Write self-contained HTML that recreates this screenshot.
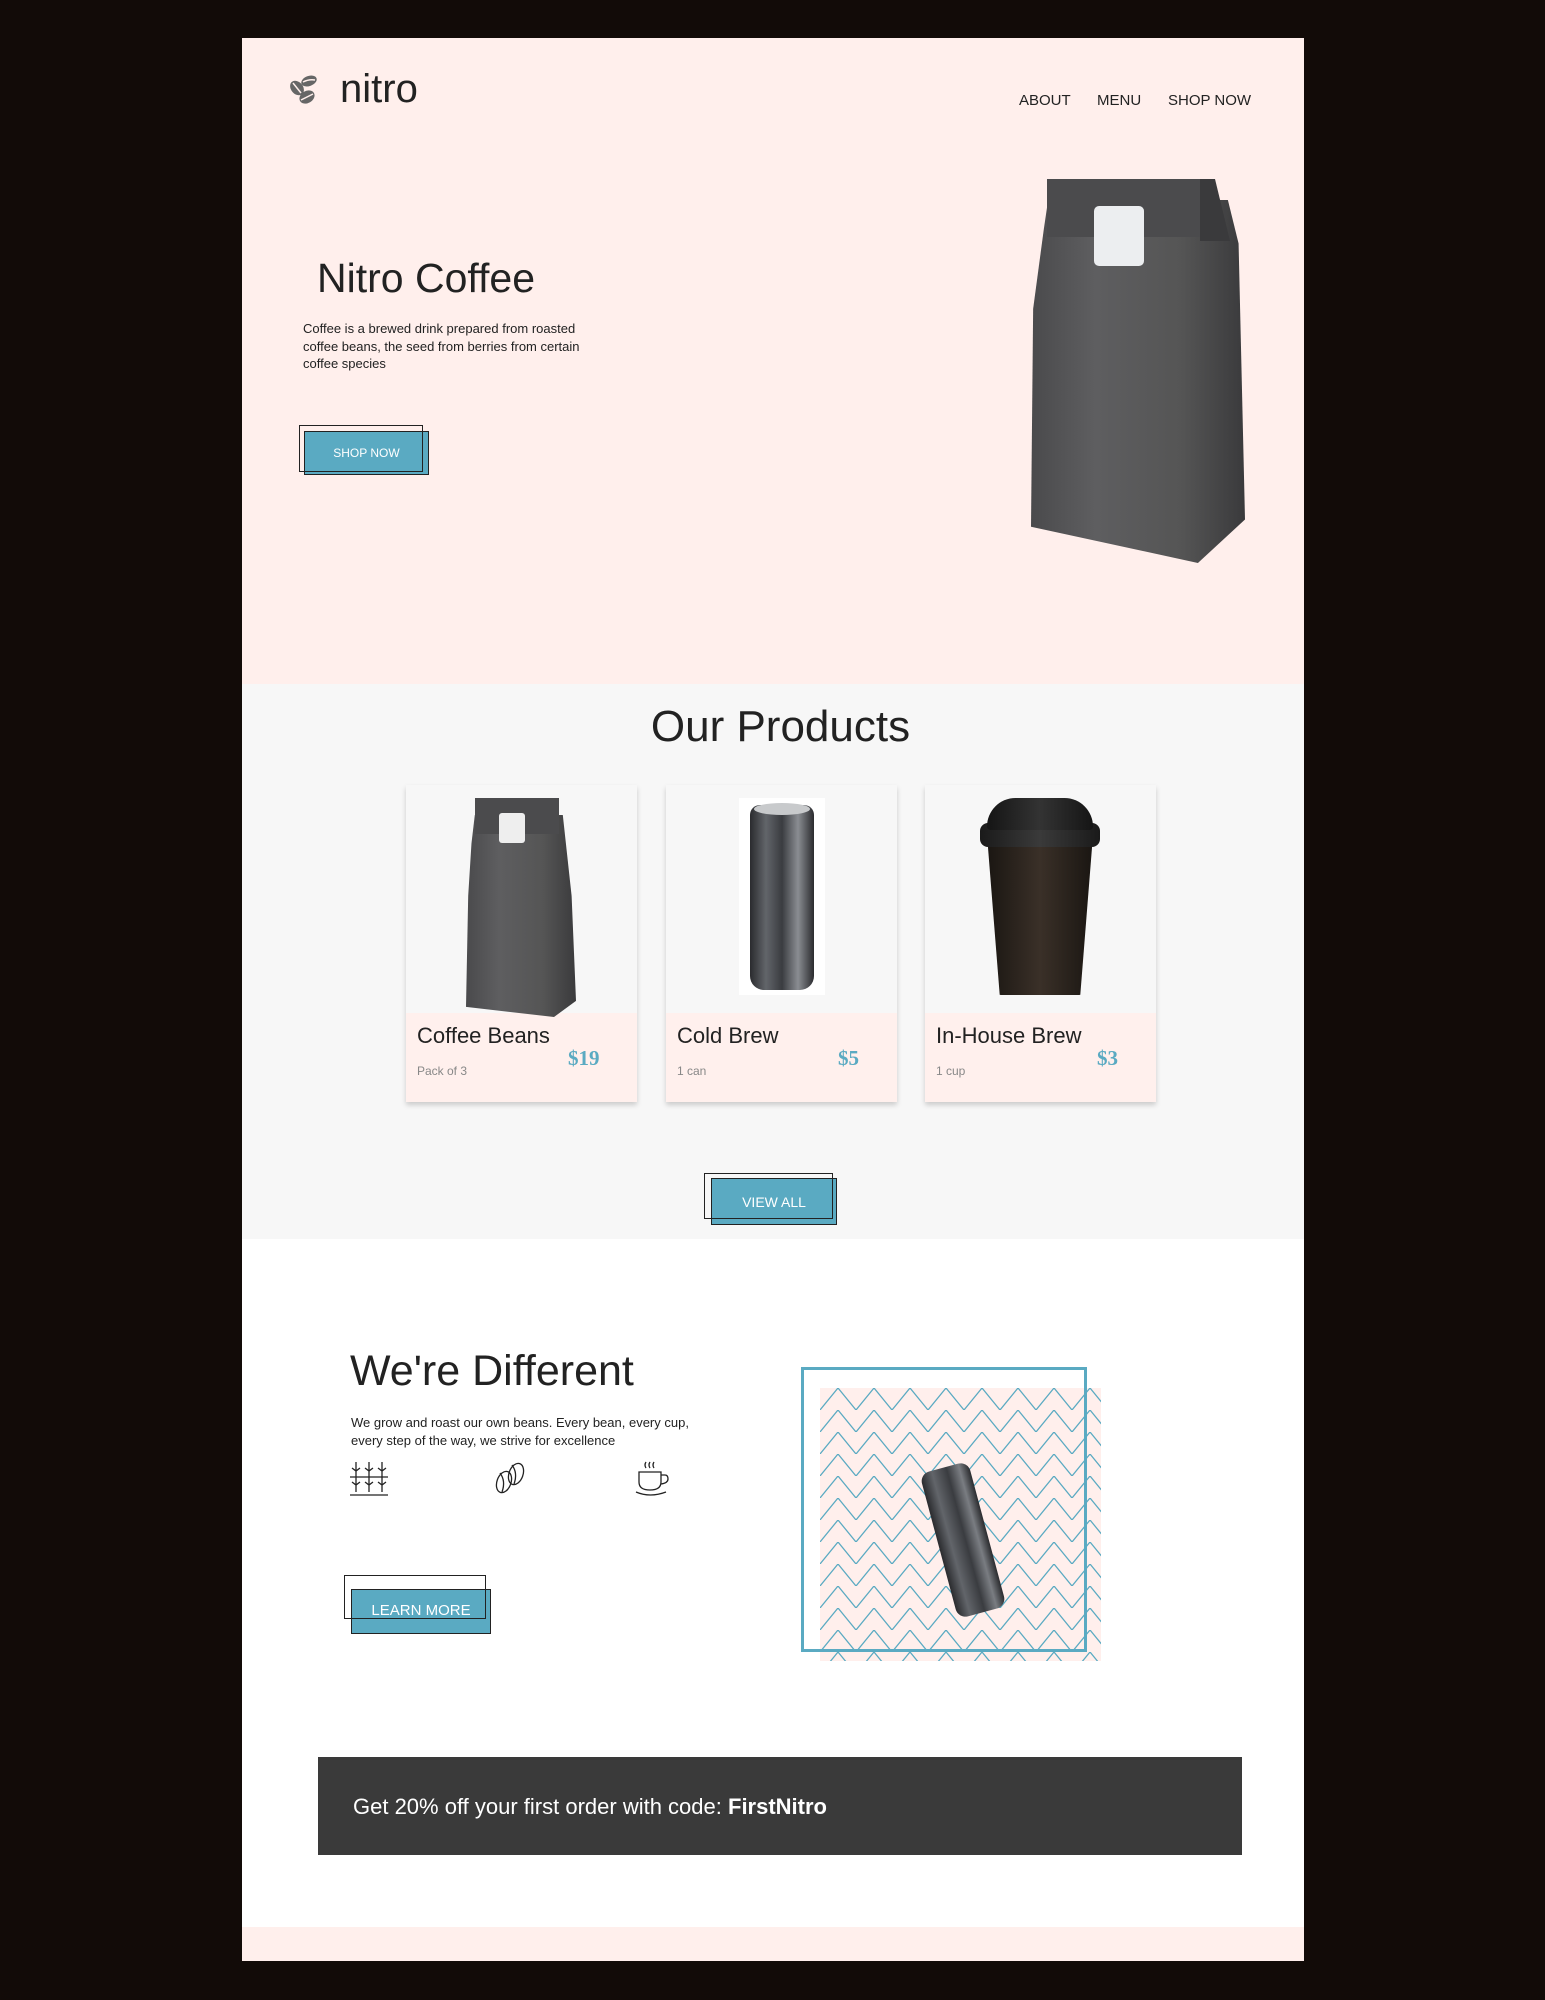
<!DOCTYPE html>
<html><head><meta charset="utf-8"><style>
*{margin:0;padding:0;box-sizing:border-box}
body{width:1545px;height:2000px;background:#120b08;position:relative;font-family:"Liberation Sans",sans-serif;overflow:hidden}
.a{position:absolute}
.page{left:242px;top:38px;width:1062px;height:1923px;background:#fff}
.btn{position:absolute;background:#5aaac2;color:#fff;font-size:12px;display:flex;align-items:center;justify-content:center;border:1.5px solid #222}
.ol{position:absolute;border:1.5px solid #222}
.bag{position:absolute;background:linear-gradient(90deg,#4a4a4c 0%,#5e5e60 30%,#555 70%,#3a3a3c 100%)}
.card{position:absolute;top:785px;width:231px;height:317px;background:#f7f7f7;box-shadow:0 3px 5px rgba(0,0,0,.18)}
.card .bot{position:absolute;left:0;right:0;bottom:0;height:89px;background:#fff0ed}
.nm{position:absolute;left:11px;top:10px;font-size:22px;color:#222;font-weight:300}
.sb{position:absolute;left:11px;top:51px;font-size:12px;color:#888}
.pr{position:absolute;top:33px;font-family:"Liberation Serif",serif;font-weight:bold;font-size:21px;color:#5aaac2}
</style></head><body>
<div class="a page"></div>
<div class="a" style="left:242px;top:38px;width:1062px;height:646px;background:#ffefec"></div>
<svg class="a" style="left:288px;top:73px" width="34" height="32" viewBox="0 0 34 32">
<ellipse cx="21" cy="8" rx="8" ry="5" fill="#666" transform="rotate(-20 21 8)"/><path d="M15 9 q6 -3 12 -2" stroke="#ffefec" stroke-width="1.5" fill="none"/>
<ellipse cx="9" cy="15" rx="6" ry="8" fill="#666" transform="rotate(-40 9 15)"/><path d="M5 10 l8 10" stroke="#ffefec" stroke-width="1.5"/>
<ellipse cx="19" cy="24" rx="8" ry="6" fill="#666" transform="rotate(-30 19 24)"/><path d="M13 27 l12 -6" stroke="#ffefec" stroke-width="1.5"/>
</svg>
<div class="a" style="left:340px;top:67px;font-size:40px;color:#222;font-weight:300">nitro</div>
<div class="a" style="left:1019px;top:92px;font-size:15px;color:#222">ABOUT</div>
<div class="a" style="left:1097px;top:92px;font-size:15px;color:#222">MENU</div>
<div class="a" style="left:1168px;top:92px;font-size:15px;color:#222">SHOP NOW</div>
<div class="a" style="left:317px;top:255px;font-size:41px;color:#222">Nitro Coffee</div>
<div class="a" style="left:303px;top:320px;font-size:13px;line-height:17.5px;color:#222;width:300px">Coffee is a brewed drink prepared from roasted coffee beans, the seed from berries from certain coffee species</div>
<div class="btn" style="left:304px;top:431px;width:125px;height:44px">SHOP NOW</div>
<div class="ol" style="left:299px;top:425px;width:124px;height:47px"></div>
<!-- hero bag -->
<div class="bag" style="left:1031px;top:200px;width:214px;height:363px;clip-path:polygon(6% 8%,8% 0,92% 0,97% 12%,100% 88%,78% 100%,0 90%,1% 30%)"></div>
<div class="a" style="left:1047px;top:179px;width:160px;height:58px;background:#4b4b4d"></div>
<div class="a" style="left:1200px;top:179px;width:30px;height:62px;background:#3a3a3c;clip-path:polygon(0 0,50% 0,100% 100%,0 100%)"></div>
<div class="a" style="left:1094px;top:206px;width:50px;height:60px;background:#eceef0;border-radius:5px"></div>
<!-- products -->
<div class="a" style="left:242px;top:684px;width:1062px;height:555px;background:#f7f7f7"></div>
<div class="a" style="left:0;width:1545px;top:702px;text-align:center;font-size:44px;color:#222;font-weight:300;padding-left:16px">Our Products</div>
<div class="card" style="left:406px"><div class="bot"><div class="nm">Coffee Beans</div><div class="sb">Pack of 3</div><div class="pr" style="left:162px">$19</div></div>
<div class="bag" style="left:60px;top:30px;width:110px;height:202px;clip-path:polygon(5% 14%,8% 0,88% 0,96% 40%,100% 92%,80% 100%,0 95%,2% 40%)"></div>
<div class="a" style="left:69px;top:13px;width:84px;height:36px;background:#4b4b4d"></div>
<div class="a" style="left:93px;top:28px;width:26px;height:30px;background:#eee;border-radius:3px"></div></div>
<div class="card" style="left:666px"><div class="bot"><div class="nm">Cold Brew</div><div class="sb">1 can</div><div class="pr" style="left:172px">$5</div></div>
<div class="a" style="left:73px;top:13px;width:86px;height:197px;background:#fff"></div>
<div class="a" style="left:84px;top:20px;width:64px;height:185px;border-radius:10px 10px 14px 14px;background:linear-gradient(90deg,#2a2b2e,#62656a 25%,#3a3c40 50%,#8a8d92 75%,#2a2b2e)"></div>
<div class="a" style="left:88px;top:18px;width:56px;height:12px;border-radius:50%;background:#c8cacc"></div></div>
<div class="card" style="left:925px"><div class="bot"><div class="nm">In-House Brew</div><div class="sb">1 cup</div><div class="pr" style="left:172px">$3</div></div>
<div class="a" style="left:62px;top:50px;width:106px;height:160px;background:linear-gradient(90deg,#1a1612,#3a3028 50%,#1a1612);clip-path:polygon(0 0,100% 0,88% 100%,12% 100%);border-radius:0 0 14px 14px"></div>
<div class="a" style="left:55px;top:38px;width:120px;height:24px;border-radius:8px;background:linear-gradient(90deg,#1a1a1a,#3a3a3a 50%,#1a1a1a)"></div>
<div class="a" style="left:62px;top:13px;width:106px;height:32px;border-radius:50px 50px 6px 6px;background:linear-gradient(90deg,#151515,#333 50%,#151515)"></div></div>
<div class="btn" style="left:711px;top:1178px;width:126px;height:47px;font-size:14px">VIEW ALL</div>
<div class="ol" style="left:704px;top:1173px;width:129px;height:46px"></div>
<!-- different -->
<div class="a" style="left:350px;top:1347px;font-size:43px;color:#222;font-weight:300">We're Different</div>
<div class="a" style="left:351px;top:1414px;font-size:13px;line-height:17.5px;color:#222;width:360px">We grow and roast our own beans. Every bean, every cup, every step of the way, we strive for excellence</div>
<svg class="a" style="left:350px;top:1460px" width="38" height="38" viewBox="0 0 38 38" fill="none" stroke="#222" stroke-width="1.3"><path d="M6 2v30M19 2v30M32 2v30M2 8l4 3 4-3M15 8l4 3 4-3M28 8l4 3 4-3M2 22l4 3 4-3M15 22l4 3 4-3M28 22l4 3 4-3M0 17h38M0 35h38"/></svg>
<svg class="a" style="left:492px;top:1460px" width="36" height="36" viewBox="0 0 36 36" fill="none" stroke="#222" stroke-width="1.3"><ellipse cx="12" cy="22" rx="7" ry="11" transform="rotate(20 12 22)"/><path d="M8 13q6 8 2 19"/><ellipse cx="24" cy="14" rx="7" ry="11" transform="rotate(20 24 14)"/><path d="M20 5q6 8 2 19"/></svg>
<svg class="a" style="left:634px;top:1460px" width="38" height="38" viewBox="0 0 38 38" fill="none" stroke="#222" stroke-width="1.3"><path d="M12 2q-2 3 0 6M16 2q-2 3 0 6M20 2q-2 3 0 6M5 12h22v10q0 8-11 8t-11-8zM27 15h4q3 0 3 4t-7 5M2 32q14 6 30 0"/></svg>
<div class="btn" style="left:351px;top:1589px;width:140px;height:45px;font-size:15px"></div>
<div class="ol" style="left:344px;top:1575px;width:142px;height:44px"></div>
<div class="a" style="left:351px;top:1602px;width:140px;text-align:center;color:#fff;font-size:15px">LEARN MORE</div>
<svg class="a" style="left:820px;top:1388px" width="281" height="273" viewBox="0 0 281 273">
<rect width="281" height="273" fill="#ffefec"/>
<defs><pattern id="z" width="36" height="22" patternUnits="userSpaceOnUse"><path d="M0 22L18 0L36 22" fill="none" stroke="#5aaac2" stroke-width="1.3"/></pattern></defs>
<rect width="281" height="273" fill="url(#z)"/>
</svg>
<div class="a" style="left:801px;top:1367px;width:286px;height:285px;border:3px solid #5aaac2"></div>
<div class="a" style="left:938px;top:1465px;width:50px;height:150px;border-radius:10px;transform:rotate(-15deg);background:linear-gradient(90deg,#2a2b2e,#62656a 25%,#3a3c40 55%,#7a7d82 80%,#2a2b2e)"></div>
<div class="a" style="left:318px;top:1757px;width:924px;height:98px;background:#3a3a3a"></div>
<div class="a" style="left:353px;top:1794px;font-size:22px;color:#fff">Get 20% off your first order with code: <b>FirstNitro</b></div>
<div class="a" style="left:242px;top:1927px;width:1062px;height:34px;background:#ffefec"></div>
</body></html>
